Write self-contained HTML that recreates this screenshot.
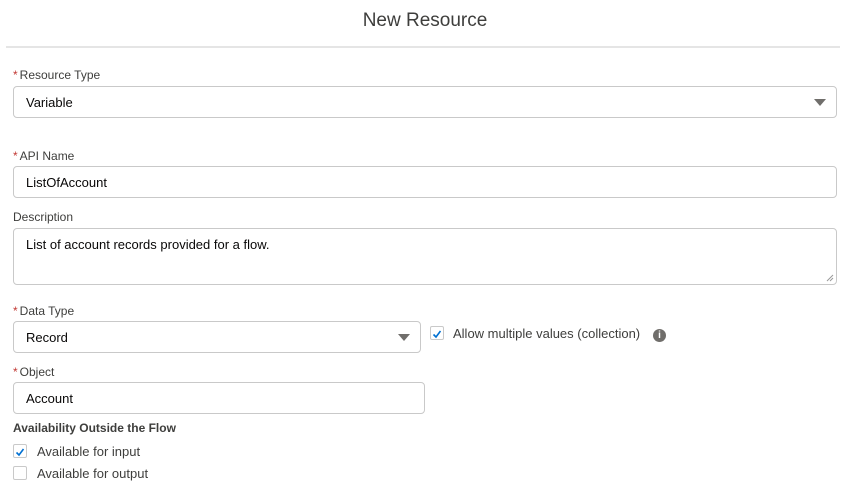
<!DOCTYPE html>
<html><head><style>
body{margin:0;width:844px;height:497px;background:#fff;font-family:"Liberation Sans",sans-serif;color:#080707;position:relative;overflow:hidden}
.a{position:absolute}
.t{left:0;width:850px;text-align:center;top:10px;font-size:19px;color:#3e3e3c}
.hr{left:6px;width:834px;top:46px;height:2px;background:#e5e5e5}
.l{font-size:12px;color:#3e3e3c;left:13px}
.l b{color:#c23934;font-weight:normal;margin-right:2px}
.box{border:1px solid #c9c9c9;border-radius:4px;box-sizing:border-box;font-size:13px;padding-left:12px;display:flex;align-items:center}
.tri{position:absolute;right:10px;top:50%;margin-top:-3px;border-left:6px solid transparent;border-right:6px solid transparent;border-top:7px solid #706e6b}
.cb{width:14px;height:14px;border:1px solid #c9c9c9;border-radius:2px;box-sizing:border-box}
.ct{font-size:13px;color:#3e3e3c}
</style></head><body>
<div class="a t">New Resource</div>
<div class="a hr"></div>
<div class="a l" style="top:68px"><b>*</b>Resource Type</div>
<div class="a box" style="left:13px;top:86px;width:824px;height:32px">Variable<span class="tri"></span></div>
<div class="a l" style="top:149px"><b>*</b>API Name</div>
<div class="a box" style="left:13px;top:166px;width:824px;height:32px">ListOfAccount</div>
<div class="a l" style="top:210px">Description</div>
<div class="a box" style="left:13px;top:228px;width:824px;height:57px;align-items:flex-start;padding-top:8px">List of account records provided for a flow.<svg style="position:absolute;right:2px;bottom:2px" width="8" height="8" viewBox="0 0 8 8"><path d="M7 1L1 7M7 4L4 7" stroke="#999" stroke-width="1"/></svg></div>
<div class="a l" style="top:304px"><b>*</b>Data Type</div>
<div class="a box" style="left:13px;top:321px;width:408px;height:32px">Record<span class="tri"></span></div>
<div class="a cb" style="left:430px;top:326px"><svg width="12" height="12" viewBox="0 0 12 12"><path d="M2.5 6.5L5 9L9.5 3" fill="none" stroke="#0070d2" stroke-width="1.6"/></svg></div>
<div class="a ct" style="left:453px;top:326px">Allow multiple values (collection)</div>
<div class="a" style="left:653px;top:329px;width:13px;height:13px;border-radius:50%;background:#706e6b;color:#fff;font-size:10px;font-weight:bold;text-align:center;line-height:13px">i</div>
<div class="a l" style="top:365px"><b>*</b>Object</div>
<div class="a box" style="left:13px;top:382px;width:412px;height:32px">Account</div>
<div class="a" style="left:13px;top:421px;font-size:12px;font-weight:bold;color:#3e3e3c">Availability Outside the Flow</div>
<div class="a cb" style="left:13px;top:444px"><svg width="12" height="12" viewBox="0 0 12 12"><path d="M2.5 6.5L5 9L9.5 3" fill="none" stroke="#0070d2" stroke-width="1.6"/></svg></div>
<div class="a ct" style="left:37px;top:444px">Available for input</div>
<div class="a cb" style="left:13px;top:466px"></div>
<div class="a ct" style="left:37px;top:466px">Available for output</div>
</body></html>
